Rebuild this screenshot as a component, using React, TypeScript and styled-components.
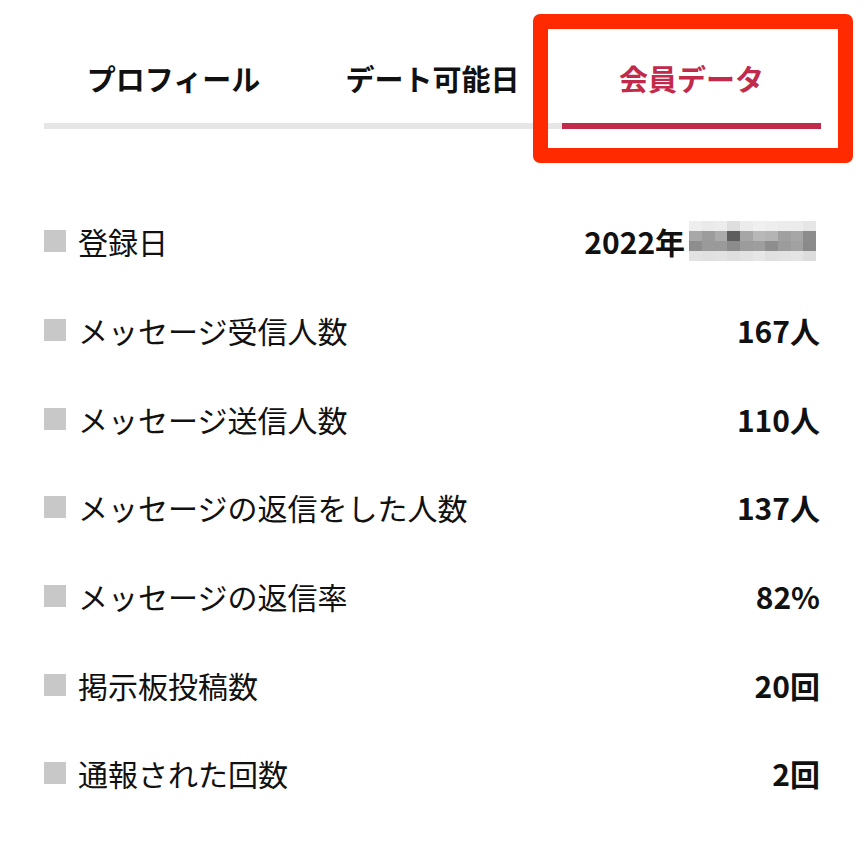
import React from "react";
import styled, { createGlobalStyle } from "styled-components";

const Global = createGlobalStyle`
  html, body { margin: 0; padding: 0; background: #ffffff; }
  body { font-family: "Noto Sans CJK JP", "Noto Sans", sans-serif; color: #111111; }
`;

const Page = styled.div`
  position: relative;
  width: 864px;
  height: 853px;
  box-sizing: border-box;
  padding: 0 43px 0 44px;
  background: #ffffff;
  overflow: hidden;
`;

const TabBar = styled.div`
  display: grid;
  grid-template-columns: 1fr 1fr 1fr;
  padding-top: 56px;
`;

const Tab = styled.div<{ $active?: boolean }>`
  display: flex;
  flex-direction: column;
  align-items: stretch;
  font-size: 29px;
  font-weight: 700;
  line-height: 44px;
  text-align: center;
  color: ${(p) => (p.$active ? "#c22a4b" : "#111111")};
`;

const TabLabel = styled.span`
  display: block;
  height: 44px;
  margin-bottom: 23px;
`;

const TabLine = styled.div<{ $active?: boolean }>`
  height: 6px;
  background: ${(p) => (p.$active ? "#c22a4b" : "#e6e6e6")};
`;

const Highlight = styled.div`
  position: absolute;
  left: 533px;
  top: 14px;
  width: 320px;
  height: 149px;
  box-sizing: border-box;
  border: 15px solid #ff2a00;
  border-radius: 7px;
`;

const List = styled.div`
  display: flex;
  flex-direction: column;
  padding-top: 68px;
  padding-right: 1px;
`;

const Row = styled.div`
  display: flex;
  align-items: center;
  justify-content: space-between;
  height: 88.7px;
`;

const Label = styled.div`
  display: flex;
  align-items: center;
  gap: 12px;
  font-size: 30px;
  font-weight: 400;
  color: #111111;
  line-height: 40px;
`;

const Bullet = styled.span`
  display: block;
  width: 22px;
  height: 22px;
  background: #c8c8c8;
`;

const Value = styled.div`
  display: flex;
  align-items: center;
  font-size: 30px;
  font-weight: 700;
  color: #111111;
  line-height: 40px;
`;

const Mosaic = styled.div`
  display: grid;
  grid-template-columns: repeat(10, 12.7px);
  grid-template-rows: repeat(4, 10px);
  margin-left: 4px;
  margin-right: 4px;
`;

const Cell = styled.span`
  display: block;
`;

const mosaic = [
  ["#eeeeee", "#eaeaea", "#ececec", "#dedede", "#ececec", "#f0f0f0", "#eeeeee", "#ececec", "#ececec", "#e6e6e6"],
  ["#a8a8a8", "#9c9c9c", "#ababab", "#5e5e5e", "#a6a6a6", "#b8b8b8", "#b4b4b4", "#a0a0a0", "#a6a6a6", "#8c8c8c"],
  ["#8e8e8e", "#9a9a9a", "#9a9a9a", "#8c8c8c", "#9c9c9c", "#9e9e9e", "#8e8e8e", "#9c9c9c", "#a2a2a2", "#8a8a8a"],
  ["#e2e2e2", "#e0e0e0", "#e2e2e2", "#dedede", "#e2e2e2", "#e6e6e6", "#e0e0e0", "#e2e2e2", "#e4e4e4", "#dcdcdc"],
];

const rows = [
  { label: "登録日", value: "2022年", blurred: true },
  { label: "メッセージ受信人数", value: "167人" },
  { label: "メッセージ送信人数", value: "110人" },
  { label: "メッセージの返信をした人数", value: "137人" },
  { label: "メッセージの返信率", value: "82%" },
  { label: "掲示板投稿数", value: "20回" },
  { label: "通報された回数", value: "2回" },
];

const tabs = [
  { label: "プロフィール" },
  { label: "デート可能日" },
  { label: "会員データ", active: true },
];

export default function App() {
  return (
    <>
      <Global />
      <Page>
        <TabBar>
          {tabs.map((t) => (
            <Tab key={t.label} $active={t.active}>
              <TabLabel>{t.label}</TabLabel>
              <TabLine $active={t.active} />
            </Tab>
          ))}
        </TabBar>
        <List>
          {rows.map((r) => (
            <Row key={r.label}>
              <Label>
                <Bullet />
                {r.label}
              </Label>
              <Value>
                {r.value}
                {r.blurred && (
                  <Mosaic>
                    {mosaic.flatMap((line, i) =>
                      line.map((c, j) => <Cell key={`${i}-${j}`} style={{ background: c }} />)
                    )}
                  </Mosaic>
                )}
              </Value>
            </Row>
          ))}
        </List>
        <Highlight />
      </Page>
    </>
  );
}
